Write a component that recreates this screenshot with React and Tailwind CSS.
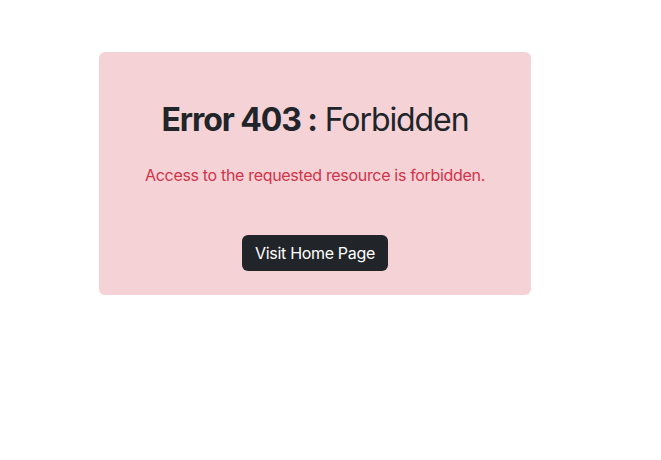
export default function App() {
    return (
        <div className="min-h-screen bg-white pt-[52px] pl-[99px]" style={{ fontFamily: 'Inter, "Noto Sans", sans-serif' }}>
            <div className="w-[432px] h-[243px] rounded-md bg-[#f4d2d6] pt-[49px] flex flex-col items-center text-center">
                <h1 className="text-[32px] leading-[38px] tracking-[-0.034em] text-[#212529]">
                    <span className="font-bold">Error 403 :</span> Forbidden
                </h1>
                <p className="mt-6 text-base leading-6 tracking-[-0.02em] text-[#d1334a]">Access to the requested resource is forbidden.</p>
                <button className="mt-[48px] h-9 w-[146px] rounded-md bg-[#212529] text-white text-base tracking-[-0.02em]">Visit Home Page</button>
            </div>
        </div>
    );
}
